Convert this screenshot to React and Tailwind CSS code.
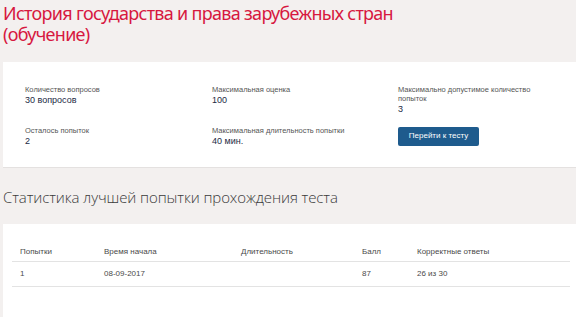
export default function App() {
  const stats = [
    { label: "Количество вопросов", value: "30 вопросов" },
    { label: "Максимальная оценка", value: "100" },
    { label: "Максимально допустимое количество попыток", value: "3" },
    { label: "Осталось попыток", value: "2" },
    { label: "Максимальная длительность попытки", value: "40 мин." },
  ];

  const rows = [{ n: "1", start: "08-09-2017", dur: "", score: "87", correct: "26 из 30" }];

  return (
    <div className="min-h-[317px] bg-[#f3f0ef] pl-[3px] font-['Open_Sans',sans-serif] overflow-hidden">
      <h1 className="pt-[3px] text-[18px] leading-[21px] tracking-[-0.7px] text-[#d7183f] font-['Noto_Sans',sans-serif] w-[420px]">
        История государства и права зарубежных стран (обучение)
      </h1>

      {/* summary card */}
      <div className="mt-[17px] bg-white h-[106px] border-b border-[#e4e1e0] pl-[22px] pt-[23px]">
        <div className="grid grid-cols-[187px_186px_160px] gap-y-[11px]">
          {stats.slice(0, 3).map((s) => (
            <Stat key={s.label} {...s} />
          ))}
          <Stat {...stats[3]} />
          <Stat {...stats[4]} />
          <div className="-mt-[6px]">
            <button className="h-[19px] w-[81px] rounded-[2px] bg-[#1e5b8d] text-[8px] text-white font-['Liberation_Sans',sans-serif]">
              Перейти к тесту
            </button>
          </div>
        </div>
      </div>

      <h2 className="mt-[19px] text-[15px] leading-[20px] font-light text-[#3a3a3a] tracking-[-0.1px]">
        Статистика лучшей попытки прохождения теста
      </h2>

      {/* table card */}
      <div className="mt-[17px] bg-white h-[100px] pl-[9px] pr-[6px] pt-[20px]">
        <table className="w-full text-[8px] text-[#4a4a4a] font-['Liberation_Sans',sans-serif]">
          <thead>
            <tr className="border-b border-[#e3e3e3] text-left">
              <th className="font-normal w-[92px] pl-[8px] h-[17px] align-middle">Попытки</th>
              <th className="font-normal w-[137px]">Время начала</th>
              <th className="font-normal w-[121px]">Длительность</th>
              <th className="font-normal w-[55px]">Балл</th>
              <th className="font-normal">Корректные ответы</th>
            </tr>
          </thead>
          <tbody>
            {rows.map((r) => (
              <tr key={r.n} className="border-b border-[#e3e3e3]">
                <td className="pl-[8px] h-[25px]">{r.n}</td>
                <td>{r.start}</td>
                <td>{r.dur}</td>
                <td>{r.score}</td>
                <td>{r.correct}</td>
              </tr>
            ))}
          </tbody>
        </table>
      </div>
    </div>
  );
}

function Stat({ label, value }) {
  return (
    <div className="font-['Liberation_Sans',sans-serif] w-[150px]">
      <div className="text-[7.5px] leading-[9px] text-[#555]">{label}</div>
      <div className="text-[9px] leading-[11px] text-[#1c2a44] mt-[1px]">{value}</div>
    </div>
  );
}
